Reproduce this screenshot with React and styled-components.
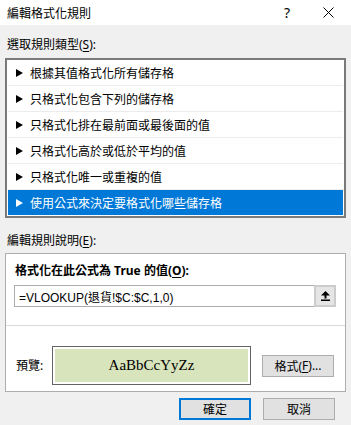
import React from "react";
import styled, { createGlobalStyle } from "styled-components";

const Global = createGlobalStyle`
  html, body { margin: 0; padding: 0; }
  body {
    background: #f0f0f0;
    font-family: "Noto Sans", "Noto Sans CJK TC", sans-serif;
    font-size: 12px;
    color: #000;
  }
`;

const Dialog = styled.div`
  width: 351px;
  height: 425px;
  background: #f0f0f0;
  overflow: hidden;
`;

const TitleBar = styled.div`
  height: 25px;
  background: #fff;
  display: flex;
  align-items: center;
  padding-left: 7px;
`;

const Title = styled.div`
  flex: 1;
  font-family: "Noto Sans CJK TC", sans-serif;
  font-size: 12px;
  line-height: 16px;
`;

const TitleButton = styled.div`
  width: ${(p) => p.$w}px;
  height: 25px;
  display: flex;
  align-items: center;
  justify-content: center;
  font-size: 14px;
  color: #000;
`;

const Content = styled.div`
  padding: 0 5px;
`;

const SectionLabel = styled.div`
  height: ${(p) => p.$h}px;
  padding-top: ${(p) => p.$pt}px;
  box-sizing: border-box;
  padding-left: 2px;
  line-height: 16px;
  font-family: "Noto Sans", "Noto Sans CJK TC", sans-serif;
  u { text-decoration: underline; text-underline-offset: 2px; }
`;

const List = styled.div`
  border: 2px solid #7a7a7a;
  background: #fff;
  padding: 0 1px 1px 1px;
`;

const Row = styled.div`
  height: 25px;
  display: flex;
  align-items: center;
  padding-left: 8px;
  gap: 7px;
  background: ${(p) => (p.$selected ? "#0078d7" : "#fff")};
  color: ${(p) => (p.$selected ? "#fff" : "#000")};
  border-bottom: ${(p) => (p.$last ? "none" : "1px solid #ececec")};
  font-family: "Noto Sans CJK TC", sans-serif;
  line-height: 16px;
`;

const Box = styled.div`
  border: 1px solid #adadad;
  background: #fff;
`;

const TopPanel = styled.div`
  padding: 9px 9px 18px 8px;
  border-bottom: 1px solid #dadada;
`;

const BoldLabel = styled.div`
  font-weight: 700;
  line-height: 16px;
  margin-left: 1px;
  margin-bottom: 6px;
  u { text-decoration: underline; text-underline-offset: 2px; }
`;

const Input = styled.div`
  height: 22px;
  box-sizing: border-box;
  border: 1px solid #adadad;
  display: flex;
  align-items: stretch;
`;

const InputText = styled.div`
  flex: 1;
  display: flex;
  align-items: center;
  padding-left: 4px;
  font-family: "Liberation Sans", "Noto Sans CJK TC", sans-serif;
  font-size: 12px;
`;

const CollapseBtn = styled.div`
  width: 22px;
  margin: -1px -1px -1px 0;
  box-sizing: border-box;
  border: 2px solid #cccccc;
  background: #e5e5e5;
  display: flex;
  align-items: center;
  justify-content: center;
`;

const BottomPanel = styled.div`
  padding: 20px 11px 6px 10px;
  display: flex;
  align-items: center;
`;

const PreviewLabel = styled.div`
  width: 36px;
  line-height: 16px;
`;

const Preview = styled.div`
  width: 199px;
  height: 39px;
  box-sizing: border-box;
  border: 1px solid #646464;
  padding: 2px;
  background: #fff;
`;

const PreviewFill = styled.div`
  height: 100%;
  background: #d8e4bc;
  display: flex;
  align-items: center;
  justify-content: center;
  font-family: "Liberation Serif", serif;
  font-size: 15px;
`;

const Button = styled.div`
  width: 72px;
  height: 22px;
  box-sizing: border-box;
  border: ${(p) => (p.$primary ? "2px solid #0078d7" : "1px solid #adadad")};
  background: #e1e1e1;
  display: flex;
  align-items: center;
  justify-content: center;
  margin-left: ${(p) => p.$ml || 0}px;
  u { text-decoration: underline; text-underline-offset: 2px; }
`;

const ButtonRow = styled.div`
  display: flex;
  justify-content: flex-end;
  gap: 12px;
  padding: 6px 11px 0 0;
`;

const Arrow = ({ color }) => (
  <svg width="7" height="8" viewBox="0 0 7 8">
    <polygon points="0,0 7,4 0,8" fill={color} />
  </svg>
);

const rules = [
  "根據其值格式化所有儲存格",
  "只格式化包含下列的儲存格",
  "只格式化排在最前面或最後面的值",
  "只格式化高於或低於平均的值",
  "只格式化唯一或重複的值",
  "使用公式來決定要格式化哪些儲存格",
];

export default function App() {
  return (
    <>
      <Global />
      <Dialog>
        <TitleBar>
          <Title>編輯格式化規則</Title>
          <TitleButton $w={36}>?</TitleButton>
          <TitleButton $w={46}>
            <svg width="11" height="11" viewBox="0 0 11 11">
              <path d="M0.5 0.5 L10.5 10.5 M10.5 0.5 L0.5 10.5" stroke="#000" strokeWidth="1" />
            </svg>
          </TitleButton>
        </TitleBar>
        <Content>
          <SectionLabel $h={33} $pt={12}>
            選取規則類型(<u>S</u>):
          </SectionLabel>
          <List>
            {rules.map((r, i) => {
              const sel = i === rules.length - 1;
              return (
                <Row key={r} $selected={sel} $last={sel}>
                  <Arrow color={sel ? "#fff" : "#000"} />
                  <span>{r}</span>
                </Row>
              );
            })}
          </List>
          <SectionLabel $h={35} $pt={15}>
            編輯規則說明(<u>E</u>):
          </SectionLabel>
          <Box>
            <TopPanel>
              <BoldLabel>
                格式化在此公式為 True 的值(<u>O</u>):
              </BoldLabel>
              <Input>
                <InputText>=VLOOKUP(退貨!$C:$C,1,0)</InputText>
                <CollapseBtn>
                  <svg width="9" height="10" viewBox="0 0 9 10">
                    <polygon points="4.5,0 9,4.5 0,4.5" fill="#000" />
                    <rect x="3.5" y="4" width="2" height="3.5" fill="#000" />
                    <rect x="0" y="8.5" width="9" height="1.5" fill="#000" />
                  </svg>
                </CollapseBtn>
              </Input>
            </TopPanel>
            <BottomPanel>
              <PreviewLabel>預覽:</PreviewLabel>
              <Preview>
                <PreviewFill>AaBbCcYyZz</PreviewFill>
              </Preview>
              <Button $ml={11}>
                格式(<u>F</u>)...
              </Button>
            </BottomPanel>
          </Box>
          <ButtonRow>
            <Button $primary>確定</Button>
            <Button>取消</Button>
          </ButtonRow>
        </Content>
      </Dialog>
    </>
  );
}
